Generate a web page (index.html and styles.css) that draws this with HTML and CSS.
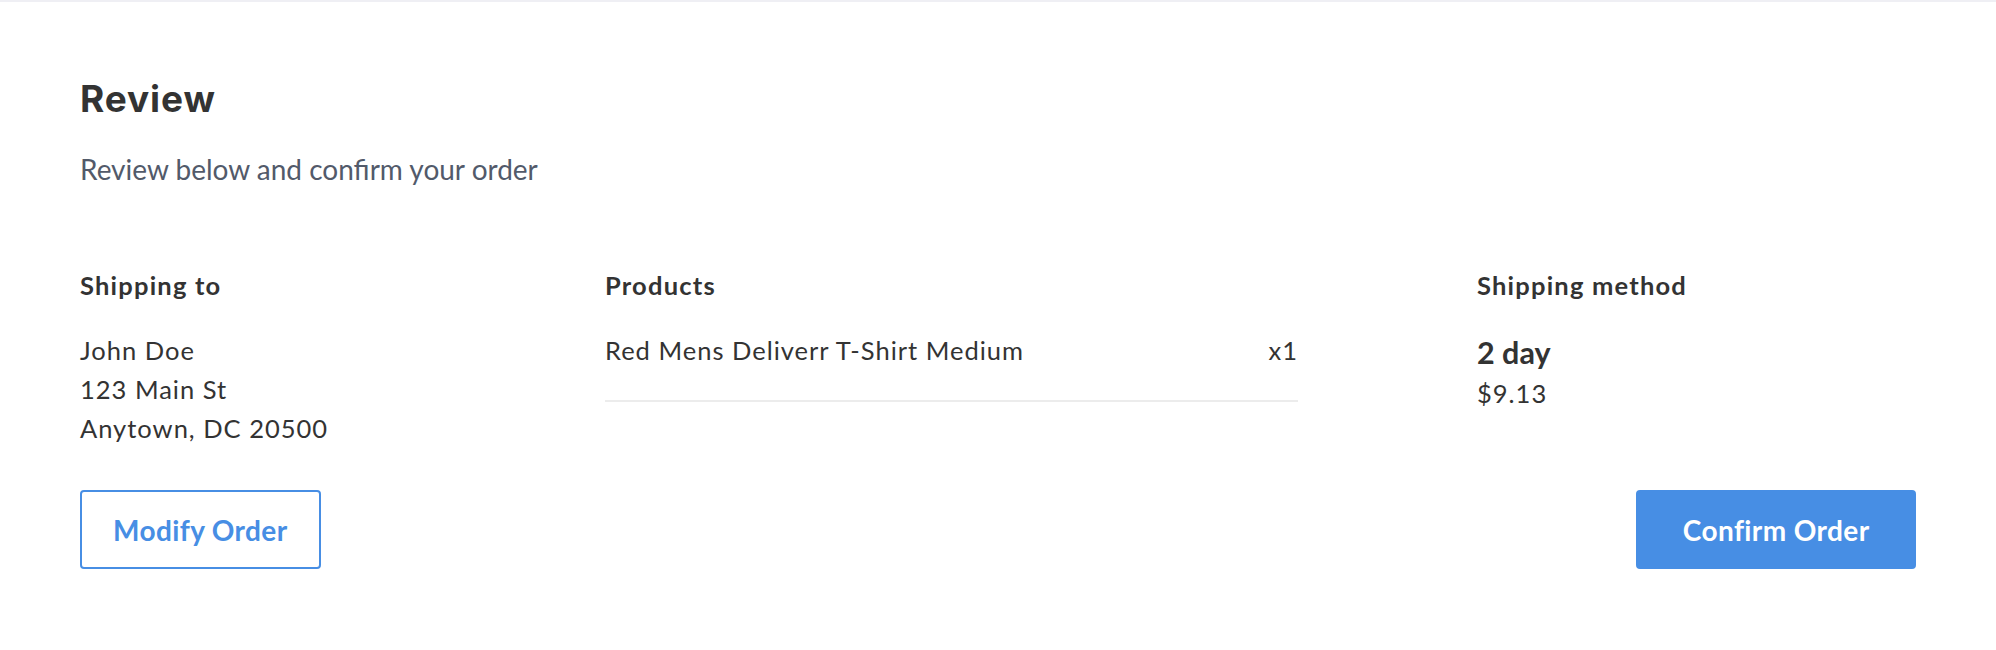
FILE: index.html
```html
<!DOCTYPE html>
<html lang="en">
<head>
<meta charset="utf-8">
<title>Review</title>
<link rel="stylesheet" href="styles.css">
</head>
<body>
<div class="topbar"></div>
<main class="review">
  <h1 class="title">Review</h1>
  <p class="subtitle">Review below and confirm your order</p>
  <section class="grid">
    <div class="col">
      <h2 class="col-title">Shipping to</h2>
      <div class="address">
        <div>John Doe</div>
        <div>123 Main St</div>
        <div>Anytown, DC 20500</div>
      </div>
    </div>
    <div class="col">
      <h2 class="col-title">Products</h2>
      <ul class="products">
        <li class="product"><span>Red Mens Deliverr T-Shirt Medium</span><span>x1</span></li>
      </ul>
    </div>
    <div class="col">
      <h2 class="col-title">Shipping method</h2>
      <div class="method-name">2 day</div>
      <div class="method-price">$9.13</div>
    </div>
  </section>
  <div class="actions">
    <button class="btn btn-outline" type="button">Modify Order</button>
    <button class="btn btn-primary" type="button">Confirm Order</button>
  </div>
</main>
</body>
</html>
```

FILE: styles.css
```css
* { box-sizing: border-box; }

body {
  margin: 0;
  background: #ffffff;
  font-family: "Lato", "Open Sans", sans-serif;
  color: #333333;
}

.topbar {
  height: 2px;
  background: #efeff4;
}

.review {
  padding: 0 80px;
}

.title {
  margin: 74px 0 0;
  font-family: "Inter", "Lato", sans-serif;
  font-weight: 700;
  font-size: 37px;
  line-height: 46px;
  letter-spacing: 0.9px;
  color: #333333;
}

.subtitle {
  margin: 30px 0 0;
  font-size: 28px;
  line-height: 34px;
  color: #525a6a;
}

.grid {
  margin-top: 84px;
  display: grid;
  grid-template-columns: 525px 872px 1fr;
}

.col-title {
  margin: 0 0 30px;
  font-size: 25.5px;
  line-height: 31px;
  font-weight: 700;
  letter-spacing: 1.2px;
  color: #333333;
}

.address {
  font-size: 25.5px;
  line-height: 39px;
  letter-spacing: 1px;
}

.products {
  list-style: none;
  margin: 0;
  padding: 0;
  width: 693px;
}

.product {
  display: flex;
  justify-content: space-between;
  font-size: 25.5px;
  line-height: 39px;
  letter-spacing: 1px;
  padding-bottom: 30px;
  border-bottom: 2px solid #ececec;
}

.method-name {
  font-size: 30.5px;
  font-weight: 700;
  line-height: 43px;
}

.method-price {
  font-size: 25.5px;
  line-height: 39px;
  letter-spacing: 1px;
}

.actions {
  margin-top: 42px;
  display: flex;
  justify-content: space-between;
}

.btn {
  font-family: "Lato", sans-serif;
  font-weight: 700;
  font-size: 28px;
  line-height: 34px;
  letter-spacing: 0.4px;
  padding: 20.5px 31px;
  border: 2px solid #478ee4;
  border-radius: 4px;
  cursor: pointer;
}

.btn-outline {
  background: #ffffff;
  color: #478ee4;
}

.btn-primary {
  background: #478ee4;
  color: #ffffff;
  padding-left: 44.5px;
  padding-right: 44.5px;
}
```
